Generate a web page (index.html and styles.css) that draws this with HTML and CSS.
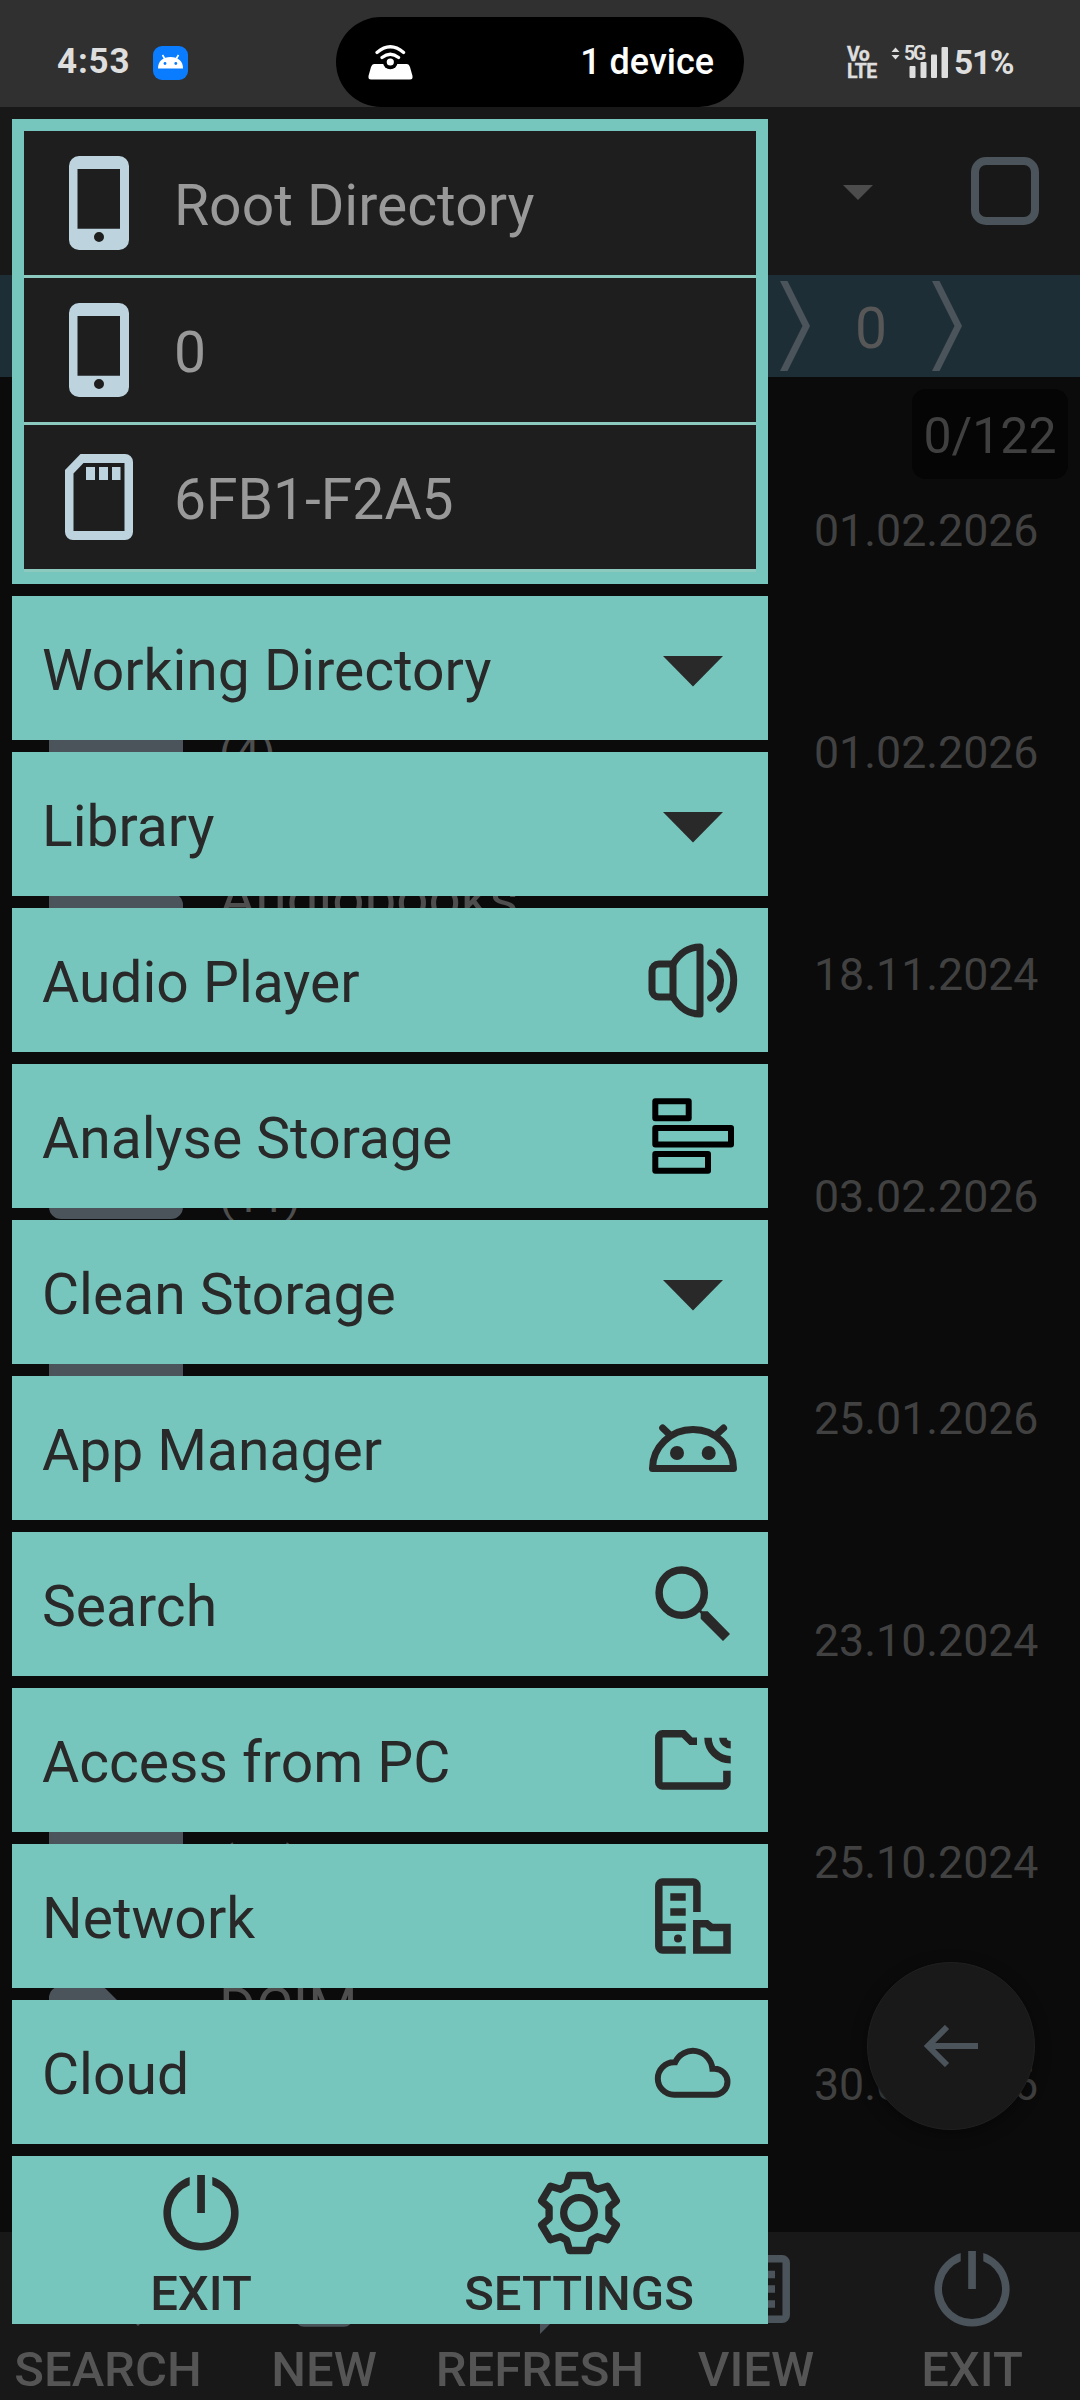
FILE: index.html
```html
<!DOCTYPE html>
<html lang="en">
<head>
<meta charset="utf-8">
<title>File Manager</title>
<link rel="stylesheet" href="styles.css">
</head>
<body>
<svg class="defs" width="0" height="0" aria-hidden="true">
  <symbol id="i-phone" viewBox="0 0 90 110"><path fill-rule="evenodd" d="M25 8H65A10 10 0 0 1 75 18V92A10 10 0 0 1 65 102H25A10 10 0 0 1 15 92V18A10 10 0 0 1 25 8ZM23.500 21V80.700H66V21ZM45 84a5 5 0 1 0 0 10a5 5 0 1 0 0-10Z"/></symbol>
  <symbol id="i-sd" viewBox="0 0 90 110"><path fill-rule="evenodd" d="M26.500 12H71a8 8 0 0 1 8 8V90a8 8 0 0 1-8 8H19a8 8 0 0 1-8-8V28ZM29.500 21L19.500 31.500V89H70.500V21ZM32 25h9v13h-9ZM45 25h9v13h-9ZM58 25h8.500v13h-8.500Z"/></symbol>
  <symbol id="i-drop" viewBox="0 0 90 90"><path d="M15 33H75L45 63.500Z"/></symbol>
  <symbol id="i-audio" viewBox="0 0 90 90"><g fill="none" stroke="currentColor" stroke-width="7" stroke-linecap="round" stroke-linejoin="round"><path d="M25 29H11a7 7 0 0 0-7 7V55a7 7 0 0 0 7 7H25"/><path d="M25 29C31 19 40 12 52 12V79C40 79 31 72 25 62Z"/><path d="M62.700 28A20.500 20.500 0 0 1 62.700 63"/><path d="M71.700 17A36 36 0 0 1 71.700 74"/></g></symbol>
  <symbol id="i-bars" viewBox="0 0 90 90"><g fill="none" stroke="#000" stroke-width="6" stroke-linejoin="round"><path d="M7.300 10.300H40.700V27.200H7.300ZM7.300 37H83V53.600H7.300ZM7.300 63H60V79.700H7.300Z"/></g></symbol>
  <symbol id="i-android" viewBox="0 0 90 90"><g fill="none" stroke="currentColor" stroke-width="7" stroke-linecap="round" stroke-linejoin="round"><path d="M4.500 65.500A40.500 39 0 0 1 85.500 65.500Z"/><path d="M14.700 25L22 32M75.600 25L68 32"/></g><circle cx="29" cy="50" r="7"/><circle cx="60.700" cy="50" r="7"/></symbol>
  <symbol id="i-search" viewBox="0 0 90 90"><circle cx="33.700" cy="33.700" r="22.600" fill="none" stroke="currentColor" stroke-width="7.500"/><path d="M49 51L51.500 48.500L54 52.300H59.700L82 75L75 82L52.700 59.700V54.500Z"/></symbol>
  <symbol id="i-access" viewBox="0 0 90 90"><g fill="none" stroke="currentColor" stroke-width="7.500"><path d="M49 26.300H43L35.500 18.800H14.500A3.700 3.700 0 0 0 10.800 22.500V67.300A3.700 3.700 0 0 0 14.500 71H75.200A3.700 3.700 0 0 0 78.900 67.300V55.700"/><path d="M60 22.700A22.700 22 0 0 0 82.700 44.700M75 22.700A7.700 7 0 0 0 82.700 29.700"/></g></symbol>
  <symbol id="i-network" viewBox="0 0 90 90"><g fill="none" stroke="currentColor" stroke-width="7.500"><path d="M48.900 41V14.800A3.700 3.700 0 0 0 45.200 11.100H14.500A3.700 3.700 0 0 0 10.800 14.800V75.200A3.700 3.700 0 0 0 14.500 78.900H37.700M10.800 56.300H37.700M22.300 26H37.700M22.300 41H37.700"/><path d="M48.800 52.800H58.800L63.500 56.400H79V78.900H48.800Z"/></g><circle cx="30" cy="67.400" r="4"/></symbol>
  <symbol id="i-cloud" viewBox="0 0 90 90"><path fill="none" stroke="currentColor" stroke-width="6" d="M26 67.700A16.200 16.200 0 0 1 26 35.300H27.200A19.500 19.500 0 0 1 64.400 41.700H66.500A13 13 0 0 1 66.500 67.700Z"/></symbol>
  <symbol id="i-power" viewBox="0 0 90 90"><path d="M33.700 9.100A37.600 37.600 0 1 0 56.300 9.100V17.200A30 30 0 1 1 33.700 17.200ZM41.200 7H48.900V45H41.200Z"/></symbol>
  <symbol id="i-gear" viewBox="0 0 90 90"><g fill="none" stroke="currentColor" stroke-width="7.300" stroke-linejoin="round"><path d="M35.500 7.500H54.500L57.500 18L63.500 21.300L73.500 18.200L82.400 33L74.900 39.500V50.500L82.400 57L73.500 71.800L63.500 68.700L57.500 72L54.500 82.500H35.500L32.500 72L26.500 68.700L16.500 71.800L7.600 57L15.100 50.500V39.500L7.600 33L16.500 18.200L26.500 21.300L32.500 18Z"/><circle cx="45" cy="45" r="15.300"/></g></symbol>
  <symbol id="i-new" viewBox="0 0 90 90"><path fill="none" stroke="currentColor" stroke-width="7.500" d="M52 11H25a5 5 0 0 0-5 5V74a5 5 0 0 0 5 5H65a5 5 0 0 0 5-5V30Z"/></symbol>
  <symbol id="i-refresh" viewBox="0 0 90 90"><path fill="none" stroke="currentColor" stroke-width="7.500" d="M45 17A27 27 0 0 1 68 59M45 73A27 27 0 0 1 22 31"/><path d="M45 0V34L28 17ZM45 56V90L62 73Z"/></symbol>
  <symbol id="i-view" viewBox="0 0 90 90"><g fill="none" stroke="currentColor" stroke-width="7.500"><rect x="14.800" y="14.800" width="60.400" height="60.400" rx="4"/><path d="M26 30.500H64M26 45H64M26 60H64"/></g></symbol>
  <symbol id="i-folder" viewBox="0 0 134 121"><path d="M12 0H50Q54 0 57 3L71 17H122A12 12 0 0 1 134 29V109A12 12 0 0 1 122 121H12A12 12 0 0 1 0 109V12A12 12 0 0 1 12 0Z"/></symbol>
</svg>

<div class="screen">
  <header class="status">
    <div class="status-left">
      <span class="clock">4:53</span>
      <svg class="droid" viewBox="0 0 35 34"><rect width="35" height="34" rx="9" fill="#0a7cff"/><path d="M9.500 9L12.500 14M25.500 9L22.500 14" stroke="#fff" stroke-width="1.600"/><path fill="#fff" d="M5 22.500C5 15 10 11 17.500 11S30 15 30 22.500Z"/><circle cx="12" cy="17.500" r="1.400" fill="#0a7cff"/><circle cx="22.800" cy="17.500" r="1.400" fill="#0a7cff"/></svg>
    </div>
    <div class="pill">
      <svg class="hotspot" viewBox="0 0 45 36"><path fill="#fff" d="M6 20H39Q41 20 42 23L44.500 32Q45 35.500 42 35.500H3Q0 35.500 0.500 32L3 23Q4 20 6 20Z"/><circle cx="22.300" cy="18" r="7.300" fill="#000"/><circle cx="22.300" cy="18" r="3.600" fill="#fff"/><g fill="none" stroke="#fff" stroke-width="3.200" stroke-linecap="round"><path d="M14 13.500Q22.300 7 30.600 13.500M9 8.500Q22.300 -3 35.600 8.500"/></g></svg>
      <span>1 device</span>
    </div>
    <div class="status-right">
      <div class="volte"><span>Vo</span><span>LTE</span></div>
      <div class="signal">
        <svg viewBox="0 0 58 31"><path d="M0.500 5L4.500 0.500L8.500 5ZM0.500 8L4.500 12.500L8.500 8Z"/><rect x="18.500" y="19" width="6" height="12" rx="1"/><rect x="29.500" y="15" width="6" height="16" rx="1"/><rect x="40" y="7.500" width="6" height="23.500" rx="1"/><rect x="50.500" y="0" width="6.500" height="31" rx="1"/></svg>
        <span class="net">5G</span>
      </div>
      <span class="battery">51%</span>
    </div>
  </header>

  <div class="appbar">
    <svg class="sort" viewBox="0 0 30 15"><path d="M0 0H30L15 15Z"/></svg>
    <span class="checkbox"></span>
  </div>

  <nav class="path">
    <svg class="chev" viewBox="0 0 30 90"><path d="M0 0H7.500L30 45L7.500 90H0L22.500 45Z"/></svg>
    <span>0</span>
    <svg class="chev" viewBox="0 0 30 90"><path d="M0 0H7.500L30 45L7.500 90H0L22.500 45Z"/></svg>
  </nav>

  <main class="list">
    <div class="counter">0/122</div>
    <div class="file"><svg><use href="#i-folder"/></svg><div class="info"><b></b><i></i></div><time>01.02.2026</time></div>
    <div class="file"><svg><use href="#i-folder"/></svg><div class="info"><b></b><i>(4)</i></div><time>01.02.2026</time></div>
    <div class="file"><svg><use href="#i-folder"/></svg><div class="info"><b>Audiobooks</b><i></i></div><time>18.11.2024</time></div>
    <div class="file"><svg><use href="#i-folder"/></svg><div class="info"><b></b><i>(11)</i></div><time>03.02.2026</time></div>
    <div class="file"><svg><use href="#i-folder"/></svg><div class="info"><b></b><i></i></div><time>25.01.2026</time></div>
    <div class="file"><svg><use href="#i-folder"/></svg><div class="info"><b></b><i></i></div><time>23.10.2024</time></div>
    <div class="file"><svg><use href="#i-folder"/></svg><div class="info"><b></b><i>(10)</i></div><time>25.10.2024</time></div>
    <div class="file"><svg><use href="#i-folder"/></svg><div class="info"><b>DCIM</b><i></i></div><time>30.01.2026</time></div>
    <div class="fab"><svg viewBox="0 0 54 42"><path fill="none" stroke="currentColor" stroke-width="6" d="M54 21H4M23 2L4 21L23 40"/></svg></div>
  </main>

  <footer class="toolbar">
    <div class="action"><svg><use href="#i-search"/></svg><span>SEARCH</span></div>
    <div class="action"><svg><use href="#i-new"/></svg><span>NEW</span></div>
    <div class="action"><svg><use href="#i-refresh"/></svg><span>REFRESH</span></div>
    <div class="action"><svg><use href="#i-view"/></svg><span>VIEW</span></div>
    <div class="action"><svg><use href="#i-power"/></svg><span>EXIT</span></div>
  </footer>

  <aside class="drawer">
    <div class="storages">
      <div class="storage"><svg><use href="#i-phone"/></svg><span>Root Directory</span></div>
      <div class="storage"><svg><use href="#i-phone"/></svg><span>0</span></div>
      <div class="storage"><svg><use href="#i-sd"/></svg><span>6FB1-F2A5</span></div>
    </div>
    <div class="item"><span>Working Directory</span><svg><use href="#i-drop"/></svg></div>
    <div class="item"><span>Library</span><svg><use href="#i-drop"/></svg></div>
    <div class="item"><span>Audio Player</span><svg><use href="#i-audio"/></svg></div>
    <div class="item"><span>Analyse Storage</span><svg><use href="#i-bars"/></svg></div>
    <div class="item"><span>Clean Storage</span><svg><use href="#i-drop"/></svg></div>
    <div class="item"><span>App Manager</span><svg><use href="#i-android"/></svg></div>
    <div class="item"><span>Search</span><svg><use href="#i-search"/></svg></div>
    <div class="item"><span>Access from PC</span><svg><use href="#i-access"/></svg></div>
    <div class="item"><span>Network</span><svg><use href="#i-network"/></svg></div>
    <div class="item"><span>Cloud</span><svg><use href="#i-cloud"/></svg></div>
    <div class="actions">
      <div class="action"><svg><use href="#i-power"/></svg><span>EXIT</span></div>
      <div class="action"><svg><use href="#i-gear"/></svg><span>SETTINGS</span></div>
    </div>
  </aside>
</div>
</body>
</html>
```
FILE: styles.css
```css
* { box-sizing: border-box; }
body { margin: 0; background: #0b0b0b; font-family: Roboto, sans-serif; }
svg { display: block; flex: none; fill: currentColor; }
.defs { position: absolute; }
.screen {
  position: relative;
  width: 1080px;
  height: 2400px;
  display: grid;
  grid-template-rows: 107px 168px 102px 1fr 168px;
  overflow: hidden;
}

/* Status bar */
.status {
  display: grid;
  grid-template-columns: 336px 408px 1fr;
  background: #303030;
  color: #dedede;
}
.status-left { display: flex; align-items: flex-start; padding: 46px 0 0 57px; }
.clock { width: 96px; font-size: 35px; font-weight: 700; line-height: 31px; letter-spacing: 0.8px; }
.droid { width: 35px; height: 34px; }
.pill {
  display: flex;
  align-items: center;
  justify-content: space-between;
  height: 90px;
  margin-top: 17px;
  padding: 0 30px 0 32px;
  border-radius: 45px;
  background: #000;
  color: #fff;
  font-size: 36px;
  font-weight: 500;
}
.hotspot { width: 45px; height: 36px; }
.status-right { display: flex; align-items: flex-start; padding: 46.500px 0 0 103px; }
.volte { display: flex; flex-direction: column; width: 44px; font-size: 19.500px; font-weight: 700; line-height: 17px; letter-spacing: -0.6px; margin-top: -1px; -webkit-text-stroke: 0.4px; }
.signal { position: relative; width: 58px; height: 31px; }
.signal svg { width: 58px; height: 31px; }
.net { position: absolute; left: 13px; top: -4px; font-size: 19.500px; font-weight: 700; line-height: 22px; letter-spacing: -2.200px; }
.battery { margin-left: 5px; font-size: 33.500px; font-weight: 700; line-height: 32px; letter-spacing: -1.3px; }

/* App behind the drawer */
.appbar {
  display: flex;
  align-items: center;
  justify-content: flex-end;
  gap: 98px;
  padding-right: 41px;
  background: #181818;
}
.sort { width: 30px; height: 15px; margin-top: 3px; color: #4c4c4c; }
.checkbox { width: 68px; height: 68px; border: 8px solid #4b545a; border-radius: 15px; }
.path {
  display: flex;
  align-items: center;
  justify-content: flex-end;
  padding-right: 118px;
  background: #1e2e36;
  color: #575757;
  font-size: 57px;
}
.path span { width: 122px; padding-top: 5px; text-align: center; }
.chev { width: 30px; height: 90px; color: #4b545a; }
.list { position: relative; padding-top: 42px; background: #0b0b0b; }
.counter {
  position: absolute;
  right: 12px;
  top: 12px;
  width: 156px;
  height: 90px;
  padding-top: 2px;
  border-radius: 14px;
  background: #050505;
  color: #404040;
  font-size: 50px;
  line-height: 90px;
  text-align: center;
}
.file { display: flex; align-items: flex-start; height: 222px; padding: 0 41.500px 0 48.500px; }
.file svg { width: 134px; height: 121px; margin: 13px 36.500px 0 0; color: #4b545a; }
.info { flex: 1; padding-top: 3px; color: #4e4e4e; }
.info b { display: block; height: 66px; font-size: 56.500px; font-weight: 400; line-height: 66px; }
.info i { display: block; height: 52px; margin-top: 17px; font-size: 45px; font-style: normal; line-height: 52px; }
.file time { margin-top: 86px; color: #414141; font-size: 44.700px; line-height: 52px; }
.fab {
  position: absolute;
  left: 867px;
  top: 1585px;
  width: 168px;
  height: 168px;
  display: grid;
  place-items: center;
  border: 1px solid #202020;
  border-radius: 50%;
  background: #191919;
  box-shadow: 0 4px 16px rgba(0, 0, 0, 0.4);
  color: #4b545a;
}
.fab svg { width: 54px; height: 42px; }
.toolbar { display: grid; grid-template-columns: repeat(5, 1fr); background: #181818; color: #555; }
.toolbar svg { color: #4b545a; }
.action { display: flex; flex-direction: column; align-items: center; gap: 7px; padding-top: 12px; font-size: 49px; font-weight: 500; line-height: 57px; }
.action svg { width: 90px; height: 90px; overflow: visible; }

/* Drawer */
.drawer {
  position: absolute;
  left: 12px;
  top: 119px;
  width: 756px;
  display: flex;
  flex-direction: column;
  gap: 12px;
  color: #292929;
  font-size: 57px;
}
.storages { padding: 12px; background: #77c6bd; }
.storage {
  display: flex;
  align-items: center;
  height: 147px;
  padding-left: 30px;
  border-bottom: 3px solid #8ccac0;
  background: #1e1e1e;
  color: #999;
}
.storage svg { width: 90px; height: 110px; margin-right: 30px; color: #bdd3de; }
.storage span, .item span { padding-top: 5px; }
.item {
  display: flex;
  align-items: center;
  justify-content: space-between;
  height: 144px;
  padding: 0 30px;
  background: #77c6bd;
}
.item svg { width: 90px; height: 90px; }
.actions { display: grid; grid-template-columns: 1fr 1fr; height: 168px; background: #77c6bd; }
```
